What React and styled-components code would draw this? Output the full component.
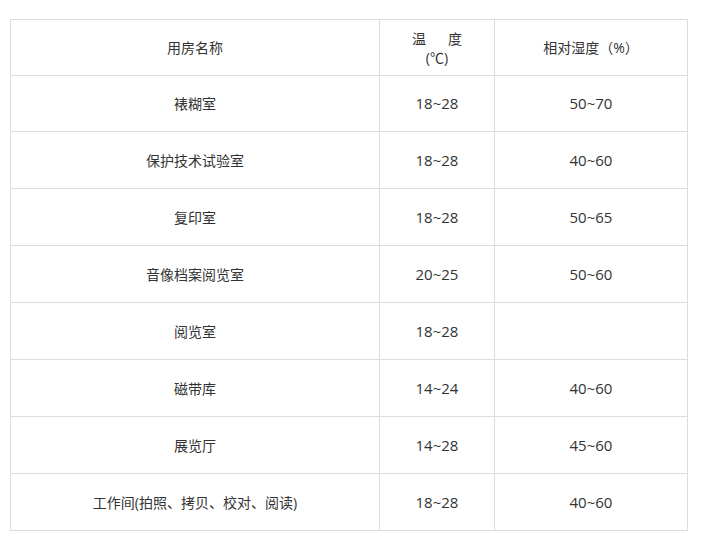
import styled, { createGlobalStyle } from "styled-components";

const GlobalStyle = createGlobalStyle`
  body {
    margin: 0;
    background: #fff;
    font-family: "Open Sans", "Noto Sans CJK SC", sans-serif;
    color: #333;
  }
`;

const Page = styled.div`
  padding: 19px 0 0 10px;
`;

const Table = styled.table`
  border-collapse: collapse;
  width: 677px;
  table-layout: fixed;
  font-size: 14px;
`;

const Row = styled.tr`
  height: 56px;

  &:nth-child(n + 3) {
    height: 57px;
  }
`;

const Cell = styled.td`
  border: 1px solid #dcdcdc;
  text-align: center;
  vertical-align: middle;
  padding: 0 8px;
  line-height: 19px;
  color: #333;
  font-size: ${(p) => (p.numeric ? "15px" : "14px")};
`;

const Spread = styled.span`
  display: inline-block;
  letter-spacing: 22px;
  margin-right: -22px;
`;

const rows = [
  ["裱糊室", "18~28", "50~70"],
  ["保护技术试验室", "18~28", "40~60"],
  ["复印室", "18~28", "50~65"],
  ["音像档案阅览室", "20~25", "50~60"],
  ["阅览室", "18~28", ""],
  ["磁带库", "14~24", "40~60"],
  ["展览厅", "14~28", "45~60"],
  ["工作间(拍照、拷贝、校对、阅读)", "18~28", "40~60"],
];

export default function App() {
  return (
    <Page>
      <GlobalStyle />
      <Table>
        <colgroup>
          <col style={{ width: 369 }} />
          <col style={{ width: 115 }} />
          <col style={{ width: 193 }} />
        </colgroup>
        <tbody>
          <Row>
            <Cell>用房名称</Cell>
            <Cell>
              <Spread>温度</Spread>
              <br />
              (℃)
            </Cell>
            <Cell>相对湿度（%）</Cell>
          </Row>
          {rows.map((r) => (
            <Row key={r[0]}>
              <Cell>{r[0]}</Cell>
              <Cell numeric>{r[1]}</Cell>
              <Cell numeric>{r[2]}</Cell>
            </Row>
          ))}
        </tbody>
      </Table>
    </Page>
  );
}
